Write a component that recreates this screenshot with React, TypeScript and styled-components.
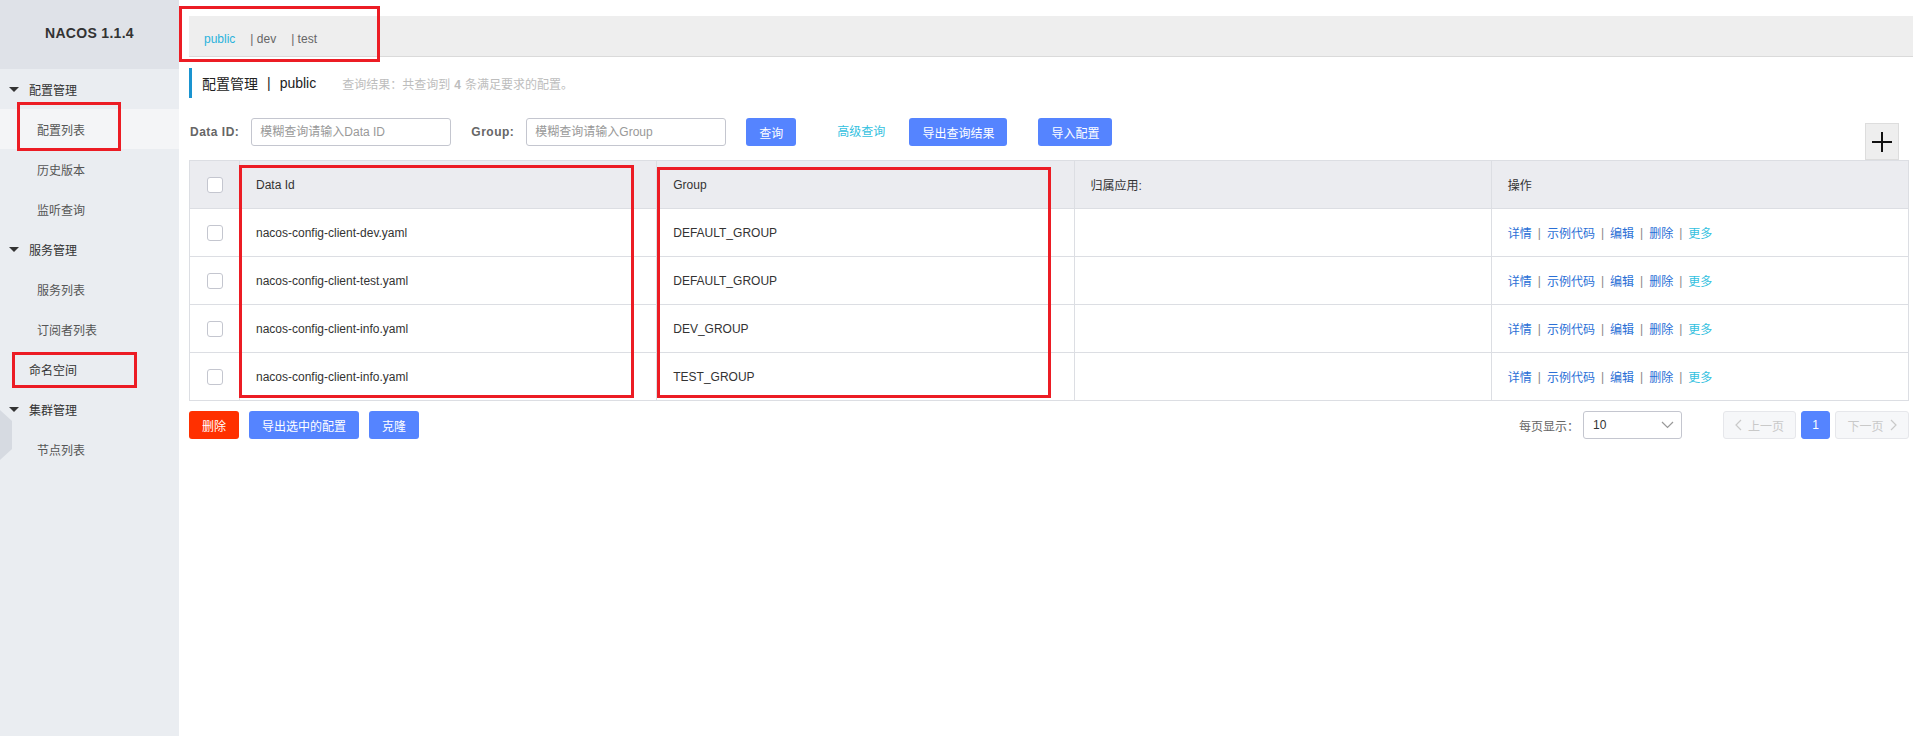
import React from "react";
import styled, { createGlobalStyle } from "styled-components";

const GlobalStyle = createGlobalStyle`
  html, body { margin: 0; padding: 0; background: #fff; }
  body {
    font-family: "Liberation Sans", "Noto Sans CJK SC", sans-serif;
    font-size: 12px;
    color: #333;
  }
  * { box-sizing: border-box; }
`;

const Page = styled.div`
  position: relative;
  display: flex;
  width: 1913px;
  height: 736px;
  overflow: hidden;
`;

const Sidebar = styled.aside`
  position: relative;
  width: 179px;
  flex: none;
  background: #eaedf1;
  display: flex;
  flex-direction: column;
`;

const Logo = styled.div`
  height: 69px;
  display: flex;
  align-items: center;
  justify-content: center;
  background: #dfe2e8;
  font-weight: bold;
  font-size: 14px;
  letter-spacing: 0.3px;
  color: #333;
  padding-bottom: 3px;
`;

const MenuItem = styled.div<{ $kind: "group" | "item" | "top"; $active?: boolean }>`
  height: 40px;
  display: flex;
  align-items: center;
  padding-left: ${(p) => (p.$kind === "group" ? 9 : p.$kind === "top" ? 29 : 37)}px;
  background: ${(p) => (p.$active ? "#f4f5f7" : "transparent")};
  color: ${(p) => (p.$kind === "item" ? "#555" : "#333")};
  font-size: 12px;
`;

const Caret = styled.span`
  width: 0;
  height: 0;
  border-left: 5px solid transparent;
  border-right: 5px solid transparent;
  border-top: 5px solid #333;
  margin-right: 10px;
`;

const Handle = styled.div`
  position: absolute;
  left: 0;
  top: 410px;
  width: 12px;
  height: 50px;
  background: #d6dae1;
  clip-path: polygon(0 0, 100% 22%, 100% 78%, 0 100%);
`;

const Main = styled.main`
  flex: 1;
  min-width: 0;
  padding: 16px 0 0 10px;
  display: flex;
  flex-direction: column;
`;

const TabBar = styled.div`
  height: 41px;
  background: #eeeeee;
  border-bottom: 1px solid #dadada;
  display: flex;
  align-items: center;
  padding: 5px 0 0 15px;
  gap: 15px;
`;

const Tab = styled.span<{ $active?: boolean }>`
  color: ${(p) => (p.$active ? "#2bb3dc" : "#666")};
  font-size: 12px;
`;

const Content = styled.div`
  margin-right: 4px;
  display: flex;
  flex-direction: column;
`;

const TitleRow = styled.div`
  margin-top: 11px;
  height: 30px;
  border-left: 3px solid #1a94d0;
  padding-left: 10px;
  display: flex;
  align-items: center;
  font-size: 14px;
  color: #222;
`;

const TitleSep = styled.span`
  margin: 0 9px;
`;

const Hint = styled.span`
  margin-left: 26px;
  font-size: 12px;
  color: #bdbdbd;
  b { font-weight: bold; margin: 0 4px; }
`;

const SearchRow = styled.div`
  margin-top: 20px;
  display: flex;
  align-items: flex-start;
`;

const FieldLabel = styled.label<{ $gap?: number }>`
  height: 28px;
  line-height: 28px;
  font-weight: bold;
  letter-spacing: 0.5px;
  color: #666;
  margin-left: ${(p) => p.$gap ?? 1}px;
  margin-right: 12px;
`;

const TextInput = styled.input`
  width: 200px;
  height: 28px;
  border: 1px solid #c4c6cf;
  border-radius: 3px;
  padding: 0 8px;
  font-family: inherit;
  font-size: 12px;
  color: #333;
  outline: none;
  &::placeholder { color: #999; }
`;

const Button = styled.button<{ $danger?: boolean; $gap?: number }>`
  height: 28px;
  padding: 0 13px;
  border: none;
  border-radius: 3px;
  background: ${(p) => (p.$danger ? "#ff3000" : "#5584ff")};
  color: #fff;
  font-family: inherit;
  font-size: 12px;
  margin-left: ${(p) => p.$gap ?? 0}px;
  cursor: pointer;
`;

const LinkText = styled.span<{ $gap?: number }>`
  height: 28px;
  line-height: 28px;
  color: #33c1e0;
  margin-left: ${(p) => p.$gap ?? 0}px;
`;

const PlusButton = styled.div`
  margin-left: auto;
  margin-right: 10px;
  margin-top: 5px;
  width: 34px;
  height: 37px;
  background: #eeeeee;
  border: 1px solid #dddddd;
  display: flex;
  align-items: center;
  justify-content: center;
`;

const Table = styled.table`
  width: 100%;
  border-collapse: collapse;
  table-layout: fixed;
  border: 1px solid #dcdee3;
`;

const Th = styled.th<{ $center?: boolean }>`
  height: 48px;
  background: #ebecf0;
  font-weight: normal;
  text-align: ${(p) => (p.$center ? "center" : "left")};
  padding: ${(p) => (p.$center ? "0" : "0 16px")};
  border: 1px solid #dcdee3;
  color: #333;
  font-size: 12px;
`;

const Td = styled.td<{ $center?: boolean }>`
  height: 48px;
  text-align: ${(p) => (p.$center ? "center" : "left")};
  padding: ${(p) => (p.$center ? "0" : "0 16px")};
  border: 1px solid #dcdee3;
  color: #333;
  font-size: 12px;
  white-space: nowrap;
`;

const Checkbox = styled.span`
  display: inline-block;
  width: 16px;
  height: 16px;
  border: 1px solid #c4c6cf;
  border-radius: 3px;
  background: #fff;
  vertical-align: middle;
`;

const Actions = styled.div`
  display: flex;
  align-items: center;
`;

const ActionLink = styled.span<{ $more?: boolean }>`
  color: ${(p) => (p.$more ? "#33c1e0" : "#2a6fd6")};
`;

const ActionSep = styled.span`
  margin: 0 6px;
  color: #888;
`;

const BottomBar = styled.div`
  margin-top: 10px;
  display: flex;
  align-items: center;
  gap: 10px;
`;

const Pagination = styled.div`
  margin-left: auto;
  display: flex;
  align-items: center;
`;

const PageLabel = styled.span`
  color: #666;
  margin-right: 4px;
`;

const Select = styled.div`
  width: 99px;
  height: 28px;
  border: 1px solid #c4c6cf;
  border-radius: 3px;
  padding: 0 7px 0 9px;
  display: flex;
  align-items: center;
  justify-content: space-between;
  color: #333;
`;

const PageButtons = styled.div`
  margin-left: 41px;
  display: flex;
  align-items: center;
  gap: 5px;
`;

const PageBtn = styled.div<{ $w: number; $current?: boolean }>`
  width: ${(p) => p.$w}px;
  height: 28px;
  border-radius: 3px;
  display: flex;
  align-items: center;
  justify-content: center;
  gap: 6px;
  background: ${(p) => (p.$current ? "#5584ff" : "#f6f7f9")};
  border: 1px solid ${(p) => (p.$current ? "#5584ff" : "#e6e7eb")};
  color: ${(p) => (p.$current ? "#fff" : "#c9c9c9")};
  font-size: 12px;
`;

const Annotation = styled.div<{ $x: number; $y: number; $w: number; $h: number }>`
  position: absolute;
  left: ${(p) => p.$x}px;
  top: ${(p) => p.$y}px;
  width: ${(p) => p.$w}px;
  height: ${(p) => p.$h}px;
  border: 3px solid #ec1c24;
  pointer-events: none;
`;

const rows = [
  { id: "nacos-config-client-dev.yaml", group: "DEFAULT_GROUP" },
  { id: "nacos-config-client-test.yaml", group: "DEFAULT_GROUP" },
  { id: "nacos-config-client-info.yaml", group: "DEV_GROUP" },
  { id: "nacos-config-client-info.yaml", group: "TEST_GROUP" },
];

const ChevronDown = () => (
  <svg width="13" height="8" viewBox="0 0 13 8" fill="none">
    <path d="M1 1 L6.5 6.5 L12 1" stroke="#999" strokeWidth="1.2" />
  </svg>
);

const ChevronLeft = () => (
  <svg width="7" height="12" viewBox="0 0 7 12" fill="none">
    <path d="M6 1 L1 6 L6 11" stroke="#c9c9c9" strokeWidth="1.2" />
  </svg>
);

const ChevronRight = () => (
  <svg width="7" height="12" viewBox="0 0 7 12" fill="none">
    <path d="M1 1 L6 6 L1 11" stroke="#c9c9c9" strokeWidth="1.2" />
  </svg>
);

const PlusIcon = () => (
  <svg width="20" height="20" viewBox="0 0 20 20">
    <path d="M0 10 H20 M10 0 V20" stroke="#111" strokeWidth="2" />
  </svg>
);

export default function App() {
  return (
    <>
      <GlobalStyle />
      <Page>
        <Sidebar>
          <Logo>NACOS 1.1.4</Logo>
          <MenuItem $kind="group"><Caret />配置管理</MenuItem>
          <MenuItem $kind="item" $active>配置列表</MenuItem>
          <MenuItem $kind="item">历史版本</MenuItem>
          <MenuItem $kind="item">监听查询</MenuItem>
          <MenuItem $kind="group"><Caret />服务管理</MenuItem>
          <MenuItem $kind="item">服务列表</MenuItem>
          <MenuItem $kind="item">订阅者列表</MenuItem>
          <MenuItem $kind="top">命名空间</MenuItem>
          <MenuItem $kind="group"><Caret />集群管理</MenuItem>
          <MenuItem $kind="item">节点列表</MenuItem>
          <Handle />
        </Sidebar>
        <Main>
          <TabBar>
            <Tab $active>public</Tab>
            <Tab>| dev</Tab>
            <Tab>| test</Tab>
          </TabBar>
          <Content>
            <TitleRow>
              配置管理<TitleSep>|</TitleSep>public
              <Hint>查询结果：共查询到<b>4</b>条满足要求的配置。</Hint>
            </TitleRow>
            <SearchRow>
              <FieldLabel>Data ID:</FieldLabel>
              <TextInput placeholder="模糊查询请输入Data ID" />
              <FieldLabel $gap={20}>Group:</FieldLabel>
              <TextInput placeholder="模糊查询请输入Group" />
              <Button $gap={20}>查询</Button>
              <LinkText $gap={41}>高级查询</LinkText>
              <Button $gap={24}>导出查询结果</Button>
              <Button $gap={31}>导入配置</Button>
              <PlusButton><PlusIcon /></PlusButton>
            </SearchRow>
            <Table>
              <colgroup>
                <col style={{ width: 50 }} />
                <col />
                <col />
                <col />
                <col />
              </colgroup>
              <thead>
                <tr>
                  <Th $center><Checkbox /></Th>
                  <Th>Data Id</Th>
                  <Th>Group</Th>
                  <Th>归属应用:</Th>
                  <Th>操作</Th>
                </tr>
              </thead>
              <tbody>
                {rows.map((r, i) => (
                  <tr key={i}>
                    <Td $center><Checkbox /></Td>
                    <Td>{r.id}</Td>
                    <Td>{r.group}</Td>
                    <Td />
                    <Td>
                      <Actions>
                        <ActionLink>详情</ActionLink>
                        <ActionSep>|</ActionSep>
                        <ActionLink>示例代码</ActionLink>
                        <ActionSep>|</ActionSep>
                        <ActionLink>编辑</ActionLink>
                        <ActionSep>|</ActionSep>
                        <ActionLink>删除</ActionLink>
                        <ActionSep>|</ActionSep>
                        <ActionLink $more>更多</ActionLink>
                      </Actions>
                    </Td>
                  </tr>
                ))}
              </tbody>
            </Table>
            <BottomBar>
              <Button $danger>删除</Button>
              <Button>导出选中的配置</Button>
              <Button>克隆</Button>
              <Pagination>
                <PageLabel>每页显示：</PageLabel>
                <Select>
                  <span>10</span>
                  <ChevronDown />
                </Select>
                <PageButtons>
                  <PageBtn $w={73}><ChevronLeft />上一页</PageBtn>
                  <PageBtn $w={29} $current>1</PageBtn>
                  <PageBtn $w={74}>下一页<ChevronRight /></PageBtn>
                </PageButtons>
              </Pagination>
            </BottomBar>
          </Content>
        </Main>
        <Annotation $x={179} $y={6} $w={201} $h={56} />
        <Annotation $x={17} $y={102} $w={104} $h={49} />
        <Annotation $x={12} $y={352} $w={125} $h={36} />
        <Annotation $x={239} $y={165} $w={395} $h={233} />
        <Annotation $x={657} $y={167} $w={394} $h={231} />
      </Page>
    </>
  );
}
